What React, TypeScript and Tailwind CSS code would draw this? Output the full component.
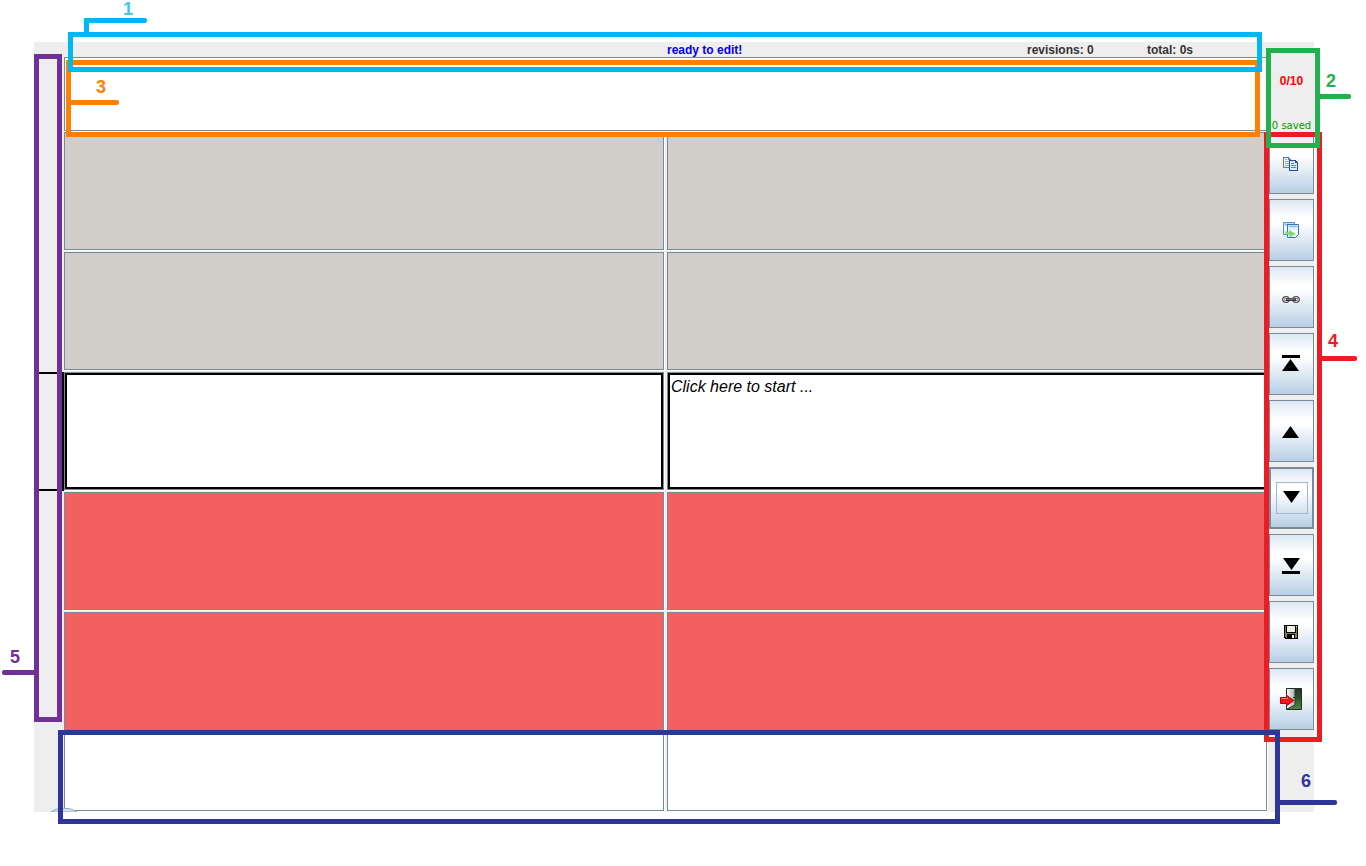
import type { ReactNode } from "react";

const Svg = ({ children }: { children: ReactNode }) => (
  <svg width="23" height="24" viewBox="0 0 23 24" aria-hidden="true" className="block shrink-0">
    {children}
  </svg>
);

const CopyIcon = () => (
  <Svg>
    <g shapeRendering="crispEdges">
      <path d="M3 6h5l3 3v8H3z" fill="#6478ac" />
      <path d="M4 7h4v2h2v7H4z" fill="#eef5ff" />
      <path d="M5 8.500h2M5 10.500h4M5 12.500h4M5 14.500h4" stroke="#7eaeea" />
      <path d="M9 9h6l3 3v8H9z" fill="#3049a0" />
      <path d="M10 10h5v2h2v7h-7z" fill="#dceaff" />
      <path d="M11 12.500h3M11 14.500h5M11 16.500h5" stroke="#4a86e4" />
      <path d="M15 9h1v1h1v1h1v1h-3z" fill="#294291" />
    </g>
  </Svg>
);

const CopyNextIcon = () => (
  <Svg>
    <defs>
      <linearGradient id="sheet" x1="0" y1="0" x2="0" y2="1">
        <stop offset="0" stopColor="#b9dcff" />
        <stop offset=".5" stopColor="#f5faff" />
        <stop offset="1" stopColor="#dceafb" />
      </linearGradient>
    </defs>
    <path d="M3.500 4.500h11v12h-11z" fill="url(#sheet)" stroke="#5b8cc8" />
    <path d="M5 6.500h8" stroke="#73adf0" />
    <path d="M7.500 6.500h11v10l-3 3h-8z" fill="url(#sheet)" stroke="#3c70b4" />
    <path d="M10 8.500h7" stroke="#7ab7f6" />
    <path d="M4.500 13c1.200 1.400 2.500 1.500 4.500 1.400V12l6.500 3.800L9.500 19v-2.200c-2.800 0-4.500-1.300-5-3.800z" fill="#7dd565" stroke="#a9e59b" strokeWidth=".5" />
  </Svg>
);

const LinkIcon = () => (
  <Svg>
    <rect x="2.500" y="11.500" width="7" height="6" rx="3" fill="#c9c5c9" stroke="#302c30" />
    <rect x="12.500" y="11.500" width="7" height="6" rx="3" fill="#c9c5c9" stroke="#302c30" />
    <rect x="4.500" y="13.500" width="3" height="2" rx="1" fill="#fff" stroke="#6b666b" strokeWidth=".8" />
    <rect x="14.500" y="13.500" width="3" height="2" rx="1" fill="#fff" stroke="#6b666b" strokeWidth=".8" />
    <path d="M6 14.500h10" stroke="#1b181b" strokeWidth="2.600" />
    <path d="M6.500 14.200h9" stroke="#aaa5aa" strokeWidth=".9" />
  </Svg>
);

const FirstIcon = () => (
  <Svg>
    <path d="M2 3h18v3H2zM10.500 7L19 19H2z" />
  </Svg>
);
const UpIcon = () => (
  <Svg>
    <path d="M10.500 7L19 19H2z" />
  </Svg>
);
const DownIcon = () => (
  <Svg>
    <path d="M3 5h17l-8.500 12z" />
  </Svg>
);
const LastIcon = () => (
  <Svg>
    <path d="M3 5h17l-8.500 12zM2 18h18v3H2z" />
  </Svg>
);

const SaveIcon = () => (
  <Svg>
    <g shapeRendering="crispEdges">
      <path d="M4 5h14v14H5v-1H4z" fill="#000" />
      <path d="M5 6h12v12H6v-1H5z" fill="#83822a" />
      <path d="M6 6h10v7H6z" fill="#000" />
      <path d="M7 6h8v6H7z" fill="#efefdd" />
      <path d="M16 6h1v1h-1z" fill="#efefdd" />
      <path d="M7 14h8v4H7z" fill="#000" />
      <path d="M12 15h2v3h-2z" fill="#fff" />
    </g>
  </Svg>
);

const ExitIcon = () => (
  <Svg>
    <defs>
      <linearGradient id="green" x1="0" y1="0" x2="0" y2="1">
        <stop offset="0" stopColor="#182716" />
        <stop offset=".5" stopColor="#2f5c2a" />
        <stop offset="1" stopColor="#4f8a3d" />
      </linearGradient>
      <linearGradient id="leaf" x1="0" y1="0" x2="1" y2="0">
        <stop offset="0" stopColor="#fafafa" />
        <stop offset="1" stopColor="#a9a9a9" />
      </linearGradient>
    </defs>
    <path d="M6.500 1.500h15v21h-15z" fill="url(#green)" stroke="#222b2b" />
    <path d="M7 2h8v16l-8 4z" fill="url(#leaf)" />
    <path d="M15 2v16l-8 4" fill="none" stroke="#2c3a2b" />
    <path d="M16 2h5v9h-5z" fill="#2b4a34" opacity=".6" />
    <path d="M13 10h2v1h-2z" fill="#222" />
    <path d="M.500 10.500h6V8.200L13.800 13.500 6.500 18.800V16.500h-6z" fill="#f5141a" stroke="#9c0b10" />
    <path d="M1.500 11.500h6v-1" fill="none" stroke="#ff7a7a" />
  </Svg>
);

const tools = [
  { label: "Copy source", icon: <CopyIcon /> },
  { label: "Copy and move on", icon: <CopyNextIcon /> },
  { label: "Join segments", icon: <LinkIcon /> },
  { label: "First segment", icon: <FirstIcon /> },
  { label: "Previous segment", icon: <UpIcon /> },
  { label: "Next segment", icon: <DownIcon />, focused: true },
  { label: "Last segment", icon: <LastIcon /> },
  { label: "Save", icon: <SaveIcon /> },
  { label: "Exit", icon: <ExitIcon /> },
];

const segments = [
  { tone: "bg-[#d1cdc8]" },
  { tone: "bg-[#d1cdc8]" },
  { tone: "bg-white", active: true, target: "Click here to start ..." },
  { tone: "bg-[#f26060]" },
  { tone: "bg-[#f26060]" },
];

type FieldProps = { label: string; tone: string; size: string; active?: boolean; text?: string };

function Field({ label, tone, size, active, text = "" }: FieldProps) {
  return (
    <div className={`border border-[#7a8a99] shadow-[1px_1px_0_#fff] ${size}`}>
      <textarea
        aria-label={label}
        defaultValue={text}
        className={`block h-full w-full resize-none overflow-hidden px-px text-base leading-6 text-black italic outline-none ${tone} ${active ? "border-2 border-black" : ""}`}
      />
    </div>
  );
}

type CalloutProps = { n: string; box: string; line: string; label: string };

function Callout({ n, box, line, label }: CalloutProps) {
  return (
    <div className={`pointer-events-none absolute border-5 ${box}`}>
      <span className={`absolute h-[5px] ${line}`} />
      <span className={`absolute font-['Liberation_Sans_Narrow','Liberation_Sans',sans-serif] text-lg leading-5 font-bold ${label}`}>{n}</span>
    </div>
  );
}

export default function App() {
  return (
    <div className="min-h-screen overflow-hidden bg-white pt-[42px] pr-[52px] pb-[42px] pl-[34px] font-['Liberation_Sans',Arial,sans-serif]">
      <div className="relative flex bg-[#eeeeee]">
        <div className="relative w-[30px] shrink-0 pt-[330px]">
          <div className="h-[119px] border-2 border-black" />
        </div>

        <main className="min-w-0 flex-1 pb-px">
          <header className="grid h-[15px] grid-cols-2 gap-[3px] text-xs leading-4 font-bold text-[#333333]">
            <div className="col-start-2 flex">
              <span className="w-[360px] text-[#0000e6]">ready to edit!</span>
              <span className="w-[120px]">revisions: 0</span>
              <span>total: 0s</span>
            </div>
          </header>
          <Field label="Preview" tone="bg-white" size="h-[74px]" />
          <div className="mt-px flex flex-col gap-0.5">
            {segments.map((s, i) => (
              <div key={i} className="grid grid-cols-2 gap-[3px]">
                <Field label={`Source ${i + 1}`} tone={s.tone} size="h-[118px]" active={s.active} />
                <Field label={`Target ${i + 1}`} tone={s.tone} size="h-[118px]" active={s.active} text={s.target} />
              </div>
            ))}
            <div className="grid grid-cols-2 gap-[3px]">
              <Field label="Source notes" tone="bg-white" size="h-[79px]" />
              <Field label="Target notes" tone="bg-white" size="h-[79px]" />
            </div>
          </div>
        </main>

        <aside className="w-[47px] shrink-0 pl-0.5">
          <div className="flex h-[90px] flex-col items-center justify-between pt-[31px] whitespace-nowrap">
            <span className="text-xs leading-4 font-bold text-[#ff0000]">0/10</span>
            <span className="font-['DejaVu_Sans',sans-serif] text-[10px] leading-3 text-[#009900]">0 saved</span>
          </div>
          <div className="flex flex-col gap-[5px]">
            {tools.map((t) => (
              <button
                key={t.label}
                type="button"
                aria-label={t.label}
                className={`flex h-[62px] items-center justify-center border-[#7a8a99] bg-[linear-gradient(#dde8f3,#fff_30%,#fff_38%,#b8cfe5)] ${t.focused ? "border-2" : "border"}`}
              >
                {t.focused ? (
                  <span className="flex h-8 w-8 items-center justify-center border border-[#a3b8cc]">{t.icon}</span>
                ) : (
                  t.icon
                )}
              </button>
            ))}
          </div>
        </aside>

        <svg width="26" height="5" viewBox="0 0 26 5" aria-hidden="true" className="absolute bottom-0 left-[17px]">
          <path d="M0 5C6 0 20 0 26 5z" fill="#d5e2ee" stroke="#8ba6c1" />
        </svg>

        <Callout
          n="3"
          box="top-[18px] right-[54px] left-8 h-[77px] border-[#ff8000]"
          line="top-[35px] left-0 w-12 rounded-r-xs bg-[#ff8000]"
          label="top-[12px] left-[25px] text-[#ff8000]"
        />
        <Callout
          n="1"
          box="-top-2.5 right-[52px] left-[34px] h-10 border-[#00b7f1]"
          line="-top-[19px] left-[11px] w-[63px] rounded-r-xs bg-[#00b7f1]"
          label="-top-[38px] left-[50px] text-[#45c5ee]"
        />
        <span className="absolute -top-6 left-[50px] h-3.5 w-[5px] bg-[#00b7f1]" />
        <Callout
          n="5"
          box="top-3 left-0 h-[668px] w-7 border-[#703096]"
          line="top-[611px] -left-[37px] w-8 rounded-l-xs bg-[#703096]"
          label="top-[588px] -left-[29px] text-[#703096]"
        />
        <Callout
          n="4"
          box="top-[90px] -right-2 h-[610px] w-[58px] border-[#ed1c24]"
          line="top-[219px] left-[53px] w-[35px] rounded-r-xs bg-[#ed1c24]"
          label="top-[194px] left-[59px] text-[#ed1c24]"
        />
        <Callout
          n="2"
          box="top-1.5 -right-1.5 h-[100px] w-[54px] border-[#22b14c]"
          line="top-[41px] left-[49px] w-[31px] rounded-r-xs bg-[#22b14c]"
          label="top-[18px] left-[55px] text-[#22b14c]"
        />
        <Callout
          n="6"
          box="right-[34px] left-6 top-[688px] h-[94px] border-[#2e3699]"
          line="top-[65px] -right-[62px] w-[57px] rounded-r-xs bg-[#2e3699]"
          label="top-[36px] -right-9 text-[#2e3699]"
        />
      </div>
    </div>
  );
}
